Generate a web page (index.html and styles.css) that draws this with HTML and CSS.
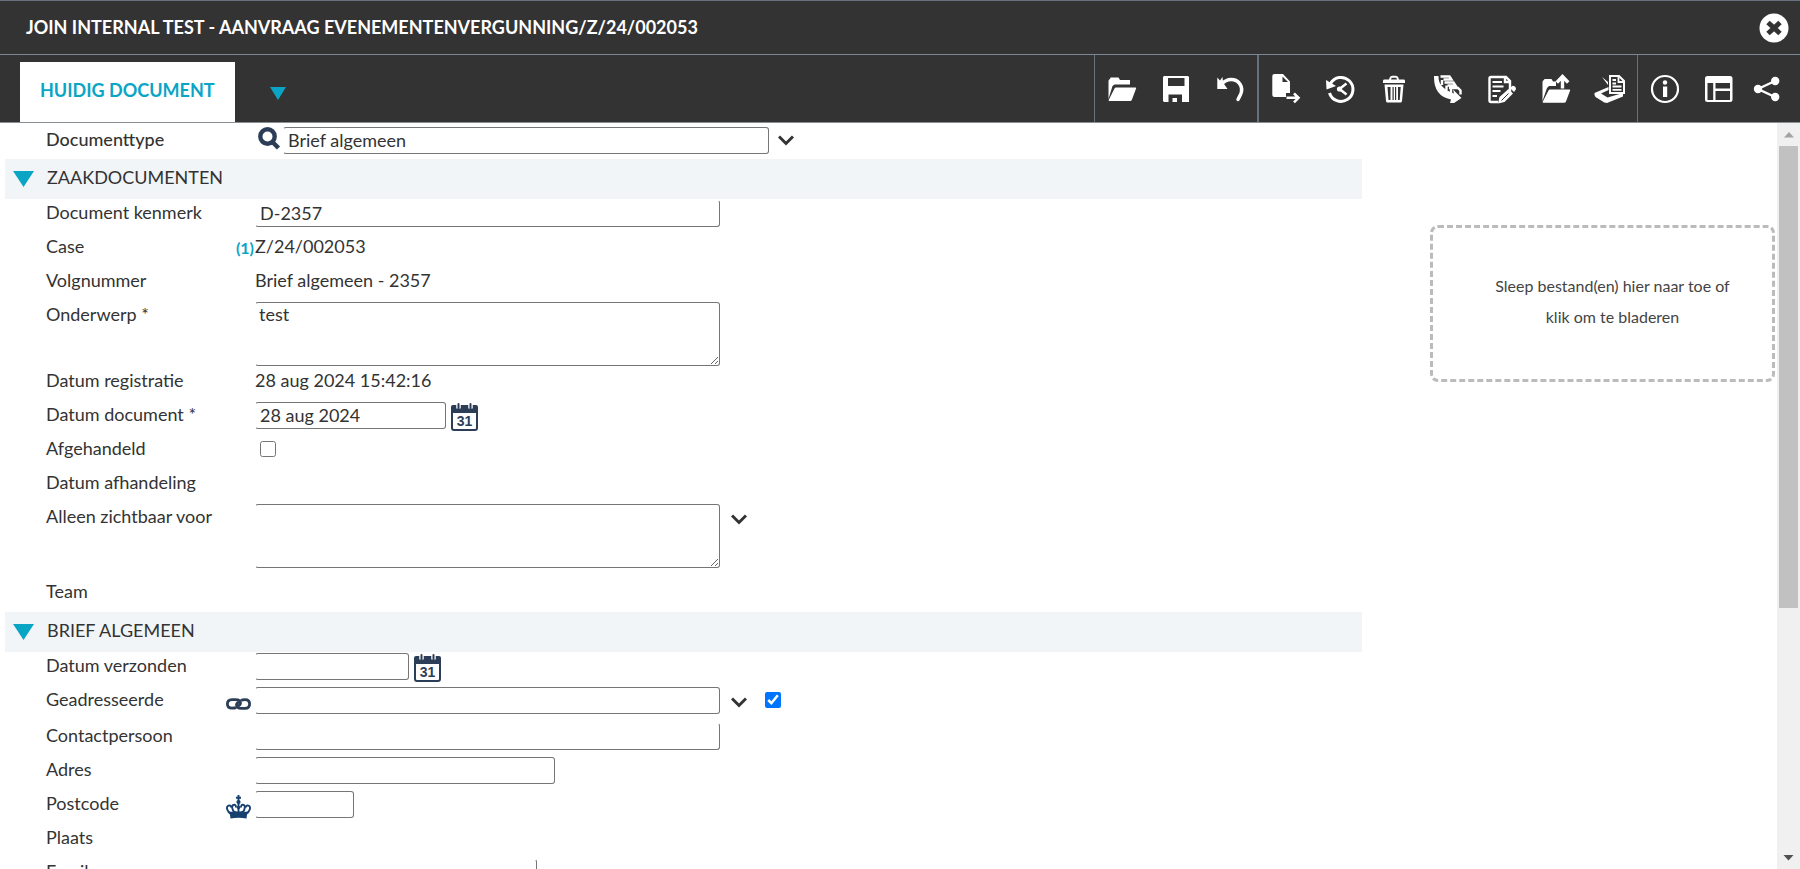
FILE: index.html
```html
<!DOCTYPE html>
<html lang="nl">
<head>
<meta charset="utf-8">
<title>Join internal test - Aanvraag evenementenvergunning</title>
<link rel="stylesheet" href="styles.css">
</head>
<body>
<svg class="defs" aria-hidden="true">
  <symbol id="chevron" viewBox="0 0 16 11"><path d="M1 1.500 8 8.500 15 1.500" fill="none" stroke="#333" stroke-width="3"/></symbol>
  <symbol id="calendar" viewBox="0 0 27 28">
    <rect x="1" y="4" width="25" height="23" rx="2" fill="#fff" stroke="#2c3e57" stroke-width="2"/>
    <path d="M0 10V4q0-2 2-2h23q2 0 2 2v6z" fill="#2c3e57"/>
    <path d="M7.500 0v5.500M19.500 0v5.500" stroke="#fff" stroke-width="4.500"/>
    <path d="M7.500 1v4M19.500 1v4" stroke="#2c3e57" stroke-width="2" stroke-linecap="round"/>
    <text x="13.500" y="23" text-anchor="middle" class="cal-text">31</text>
  </symbol>
</svg>

<header class="titlebar">
  <h1 class="title">JOIN INTERNAL TEST - AANVRAAG EVENEMENTENVERGUNNING/Z/24/002053</h1>
  <button class="close" type="button" aria-label="Sluiten">
    <svg viewBox="0 0 30 30" width="30" height="30"><circle cx="15" cy="15" r="14.500" fill="#fff"/><path d="M9 9.500 21 20.500M21 9.500 9 20.500" stroke="#333" stroke-width="5"/></svg>
  </button>
</header>

<nav class="toolbar">
  <button class="tab" type="button">HUIDIG DOCUMENT</button>
  <button class="tab-more" type="button" aria-label="Meer tabbladen"><svg viewBox="0 0 16 13" width="16" height="13"><path d="M0 0h16L8 13z" fill="#0aa5c5"/></svg></button>
  <div class="tools">
    <div class="group">
      <button type="button" aria-label="Openen"><svg viewBox="0 0 36 36"><path d="M4.500 28V10q0-1.500 1.500-2l.5-1.500h8L16 9h10v4.500H10.500L8.500 15z"/><path d="M12 16.500h19.500q1 0 .6 1L28 28.500q-.6 1.500-2 1.500H5.500q-1.200 0-.8-1L10.500 17.500q.5-1 1.500-1z"/></svg></button>
      <button type="button" aria-label="Opslaan"><svg viewBox="0 0 36 36"><path fill-rule="evenodd" d="M6 5h24l1 1v25H6l-1-1V6zM10 7v8h16.500V7zM10.500 23.500V31h4v-4H19v4h5v-7.500z"/></svg></button>
      <button type="button" aria-label="Ongedaan maken"><svg viewBox="0 0 36 36"><path d="M5.300 6.500 8 9.500 10.500 6l.5 5.500 4.500 6.500H5.300z"/><path d="M9 13.500C13 9.500 16 8.500 19 8.500c8 0 13 7.500 9.500 15l-2.500 5" fill="none" stroke="#fff" stroke-width="3.500" stroke-linecap="round"/></svg></button>
    </div>
    <div class="group">
      <button type="button" aria-label="Document verplaatsen"><svg viewBox="0 0 36 36"><path fill-rule="evenodd" d="M6.500 3H15l7 7.500V22h-4v4H6.500q-2.200 0-2.200-2V5q0-2 2.200-2zM14.500 5.500v5.500H20z"/><path d="M18.500 26.800H30M26 22.300l4.500 4.500-4.500 4.500" fill="none" stroke="#fff" stroke-width="2.600"/></svg></button>
      <button type="button" aria-label="Geschiedenis"><svg viewBox="0 0 36 36"><path d="M8.500 12.500A12 12 0 1 1 7.500 22" fill="none" stroke="#fff" stroke-width="3"/><path d="M4 9l.5 9.500 9.500-3.500z"/><path d="M24.500 12.500 17.500 18l7 5.500" fill="none" stroke="#fff" stroke-width="2.500"/><circle cx="17.500" cy="18" r="2.600"/></svg></button>
      <button type="button" aria-label="Verwijderen"><svg viewBox="0 0 36 36"><path d="M7 12V9.800q0-1.300 1.500-1.300h4.500l1-2.800 2-1h4l2 1 1 2.800h4.500q1.500 0 1.500 1.300V12zM15 8.500h6l-.7-1.700h-4.600z" fill-rule="evenodd"/><path fill-rule="evenodd" d="M8.500 13.500h19L26 30q-.2 1.500-1.500 1.500h-13Q10.200 31.500 10 30zM11.500 16l1 13h2V16zm5 0v13h1.200V16zm2.500 0v13h1.200V16zm3 0v13h1.700l1-13z"/></svg></button>
      <button type="button" aria-label="Doorsturen"><svg viewBox="0 0 36 36"><path d="M10.500 5.500h9l2 3h-8M12 9v5M14.500 11.500h9l2 3h-8M16.500 14.500v5M19 17h9l2.500 2.500v4M21 18v4" fill="none" stroke="#fff" stroke-width="2.400"/><path d="M4 5h4.500q-.5 12 15.500 17.500l-1-4L31.500 27 24 32h-4l1-3.500Q3.500 25 4 5z"/></svg></button>
      <button type="button" aria-label="Document bewerken"><svg viewBox="0 0 36 36"><path d="M26 21V10l-4-4H7Q5.500 6 5.500 7.500v22q0 1.500 1.500 1.500h7M21 6v5h5" fill="none" stroke="#fff" stroke-width="2.400"/><path d="M8.500 11H18M8.500 15.500h11M8.500 20h8M8.500 25H13" stroke="#fff" stroke-width="1.800"/><path d="M14 32.500l1.500-6.500 9-8 4.500 4.500-8.500 8.500zM26 17l2.500-2.300q3.500 0 3.500 3.500L30 21z"/><path d="M17.500 29.500l7-7" stroke="#333"/></svg></button>
      <button type="button" aria-label="Exporteren"><svg viewBox="0 0 36 36"><path d="M4.500 30V11q0-1.500 1.500-2l.5-1h7l1.500 2.500h3V15H11L9 17z"/><path d="M12 18.500h19.500q1 0 .6 1L28 30.500q-.5 1.200-2 1.200H5.500q-1.200 0-.8-1L10.500 19.500q.5-1 1.500-1z"/><path d="M24.500 17.500V7M18.800 11.500l5.700-6 5.700 6" fill="none" stroke="#fff" stroke-width="3.400"/></svg></button>
      <button type="button" aria-label="Scannen"><svg viewBox="0 0 36 36"><path d="M10 6l6 5v3zM2.500 22l14-6v3L9 22.500l6.500 4L31 22v3.500L15 32q-3 0-5-2l-6.500-4q-1.500-1.500-1-4z"/><path fill="#333" stroke="#fff" stroke-width="2" d="M18 5h9l5 5v12H18z"/><path d="M26.500 5v6H32M20.500 9H24M20.500 12.500H24M20.500 15.500h9M20.500 18.800h9" fill="none" stroke="#fff" stroke-width="1.800"/></svg></button>
    </div>
    <div class="group group-end">
      <button type="button" aria-label="Informatie"><svg viewBox="0 0 36 36"><circle cx="18" cy="18" r="13" fill="none" stroke="#fff" stroke-width="2.200"/><circle cx="18" cy="11.500" r="2.200"/><path d="M16 15.500h4.200V26H16z"/></svg></button>
      <button type="button" aria-label="Indeling"><svg viewBox="0 0 36 36"><path fill-rule="evenodd" d="M6.500 5h22.500q2.500 0 2.500 2.500v21q0 2.500-2.500 2.500H6.500Q4 31 4 28.500v-21Q4 5 6.500 5zM6.500 12v17h5.700V12zm8 0v5.500H29V12zm0 8V29H29v-9z"/></svg></button>
      <button type="button" aria-label="Delen"><svg viewBox="0 0 36 36"><path d="M26 10 9 18l17 8" fill="none" stroke="#fff" stroke-width="2.400"/><circle cx="9" cy="18" r="4.200"/><circle cx="26.200" cy="10" r="4.200"/><circle cx="26.200" cy="26" r="4.200"/></svg></button>
    </div>
  </div>
</nav>

<main class="content">
  <form class="form">
    <div class="row row-type">
      <label class="label strong" for="type">Documenttype</label>
      <div class="aux"></div>
      <div class="field">
        <button class="icon search" type="button" aria-label="Zoeken"><svg viewBox="0 0 23 23" width="23" height="23"><circle cx="9.500" cy="9.500" r="7.200" fill="none" stroke="#2c3e57" stroke-width="4.400"/><path d="M14.500 15l6 6" stroke="#2c3e57" stroke-width="4.500"/></svg></button>
        <input class="box w-type" id="type" type="text" value="Brief algemeen">
        <button class="icon drop" type="button" aria-label="Keuzelijst"><svg width="16" height="11"><use href="#chevron"/></svg></button>
      </div>
    </div>

    <button class="section" type="button"><svg viewBox="0 0 21 16" width="21" height="16"><path d="M0 0h21L10.500 16z" fill="#0aa5c5"/></svg><span>ZAAKDOCUMENTEN</span></button>

    <div class="row"><label class="label" for="kenmerk">Document kenmerk</label><div class="aux"></div><div class="field"><input class="box w-full open-top" id="kenmerk" type="text" value="D-2357"></div></div>
    <div class="row"><span class="label">Case</span><div class="aux"><a class="count" href="#case">(1)</a></div><div class="field"><span class="value" id="case">Z/24/002053</span></div></div>
    <div class="row"><span class="label">Volgnummer</span><div class="aux"></div><div class="field"><span class="value">Brief algemeen - 2357</span></div></div>
    <div class="row row-area"><label class="label" for="onderwerp">Onderwerp *</label><div class="aux"></div><div class="field"><textarea class="box area w-full" id="onderwerp">test</textarea></div></div>
    <div class="row"><span class="label">Datum registratie</span><div class="aux"></div><div class="field"><span class="value">28 aug 2024 15:42:16</span></div></div>
    <div class="row"><label class="label" for="datum">Datum document *</label><div class="aux"></div><div class="field"><input class="box w-date" id="datum" type="text" value="28 aug 2024"><button class="icon cal" type="button" aria-label="Kalender"><svg width="27" height="28"><use href="#calendar"/></svg></button></div></div>
    <div class="row"><label class="label" for="afgehandeld">Afgehandeld</label><div class="aux"></div><div class="field"><input class="check" id="afgehandeld" type="checkbox"></div></div>
    <div class="row"><span class="label">Datum afhandeling</span></div>
    <div class="row row-visible"><label class="label" for="zichtbaar">Alleen zichtbaar voor</label><div class="aux"></div><div class="field"><textarea class="box area w-full" id="zichtbaar"></textarea><button class="icon drop" type="button" aria-label="Keuzelijst"><svg width="16" height="11"><use href="#chevron"/></svg></button></div></div>
    <div class="row"><span class="label">Team</span></div>

    <button class="section" type="button"><svg viewBox="0 0 21 16" width="21" height="16"><path d="M0 0h21L10.500 16z" fill="#0aa5c5"/></svg><span>BRIEF ALGEMEEN</span></button>

    <div class="row"><label class="label" for="verzonden">Datum verzonden</label><div class="aux"></div><div class="field"><input class="box w-sent" id="verzonden" type="text"><button class="icon cal" type="button" aria-label="Kalender"><svg width="27" height="28"><use href="#calendar"/></svg></button></div></div>
    <div class="row row-party"><label class="label" for="geadresseerde">Geadresseerde</label>
      <div class="aux"><button class="icon" type="button" aria-label="Koppelen"><svg viewBox="0 0 25 12" width="25" height="12"><g fill="none" stroke="#2c3e57" stroke-width="2.800"><path d="M10 9.500q-1 .7-4 .7Q1.400 10.200 1.400 6T6 1.600h3.500q5 0 5 3.400 0 2-2.500 3"/><path d="M15 2.500q1-.8 4-.8 4.600 0 4.600 4.300T19 10.400h-3.500q-5 0-5-3.400 0-2 2.500-3"/></g></svg></button></div>
      <div class="field"><input class="box w-full" id="geadresseerde" type="text"><button class="icon drop" type="button" aria-label="Keuzelijst"><svg width="16" height="11"><use href="#chevron"/></svg></button><input class="check check-gap" type="checkbox" checked aria-label="Geadresseerde actief"></div></div>
    <div class="row"><label class="label" for="contact">Contactpersoon</label><div class="aux"></div><div class="field"><input class="box w-full open-top" id="contact" type="text"></div></div>
    <div class="row"><label class="label" for="adres">Adres</label><div class="aux"></div><div class="field"><input class="box w-address" id="adres" type="text"></div></div>
    <div class="row"><label class="label" for="postcode">Postcode</label>
      <div class="aux"><button class="icon" type="button" aria-label="Adres ophalen"><svg viewBox="0 0 25 24" width="25" height="24"><g fill="none" stroke="#17406f" stroke-width="1.900"><path d="M12.500 0v18M10 2.700h5"/><path d="M5 19C1 16.500 0 12 2 10.800q2.500-1 3.500 1.700M20 19c4-2.500 5-7 3-8.200q-2.500-1-3.500 1.700"/><path d="M9 18C5.500 14.500 5.500 10.500 7.500 9.800q2.500-.6 2.500 2.700M16 18c3.500-3.500 3.500-7.500 1.500-8.200q-2.500-.6-2.500 2.700"/></g><g fill="#17406f"><circle cx="12.500" cy="7" r="2.100"/><circle cx="12.500" cy="12.500" r="1.800"/><path d="M3.500 16.500q4.500.8 5.500-.5 3.500 1 7 0 1 1.300 5.500.5l-1 7q-8-1.500-16 0z"/></g></svg></button></div>
      <div class="field"><input class="box w-post" id="postcode" type="text"></div></div>
    <div class="row"><span class="label">Plaats</span></div>
    <div class="row"><label class="label" for="email">Email</label><div class="aux"></div><div class="field"><input class="box w-mail open-top" id="email" type="email"></div></div>
  </form>

  <button class="dropzone" type="button">Sleep bestand(en) hier naar toe of<br>klik om te bladeren</button>

  <div class="scrollbar" aria-hidden="true">
    <svg viewBox="0 0 23 23" width="23" height="23"><path d="M7 14.500h10L12 9z" fill="#a3a3a3"/></svg>
    <div class="track"><div class="thumb"></div></div>
    <svg viewBox="0 0 23 23" width="23" height="23"><path d="M6.500 9h10l-5 5.500z" fill="#505050"/></svg>
  </div>
</main>
</body>
</html>
```

FILE: styles.css
```css
* { box-sizing: border-box; }

body {
  margin: 0;
  height: 100vh;
  display: flex;
  flex-direction: column;
  overflow: hidden;
  background: #fff;
  color: #333;
  font: 18px/24px Lato, "Open Sans", sans-serif;
}

button {
  margin: 0;
  padding: 0;
  border: 0;
  background: none;
  color: inherit;
  font: inherit;
  cursor: pointer;
}

svg { display: block; }
.defs { position: absolute; width: 0; height: 0; }
.cal-text { font: bold 14px "Liberation Sans", sans-serif; fill: #2c3e57; }

/* Title bar */
.titlebar {
  flex: none;
  height: 55px;
  display: flex;
  align-items: center;
  justify-content: space-between;
  padding: 0 11px 0 26px;
  border-top: 1px solid #66717d;
  border-bottom: 1px solid #7b8792;
  background: #333;
  color: #fff;
}
.title { margin: 0; padding-bottom: 2px; font-size: 18px; font-weight: 700; line-height: 24px; }

/* Tabs and tools */
.toolbar {
  flex: none;
  height: 68px;
  display: flex;
  align-items: stretch;
  padding-left: 20px;
  background: #333;
  border-bottom: 1px solid #8a8f93;
}
.tab {
  margin-top: 7px;
  padding: 0 20px 5px;
  background: #fff;
  color: #0aa5c5;
  font-weight: 700;
}
.tab-more { padding: 10px 35px 0; }
.tools { display: flex; margin-left: auto; }
.group { display: flex; border-left: 1px solid #66717d; }
.group + .group { border-left-width: 2px; }
.group.group-end { border-left-width: 1px; padding-right: 12px; }
.group button { width: 54px; display: flex; align-items: center; justify-content: center; }
.group-end button:last-child { width: 42px; }
.group svg { width: 36px; height: 36px; fill: #fff; }

/* Content */
.content { flex: 1; min-height: 0; display: flex; align-items: flex-start; overflow: hidden; }
.form { flex: 1; padding-left: 5px; }

.section {
  width: 100%;
  height: 40px;
  display: flex;
  align-items: center;
  gap: 13px;
  padding-left: 8px;
  padding-bottom: 4px;
  background: #f1f5f7;
}
.section svg { margin-top: 4px; }

.row {
  display: grid;
  grid-template-columns: 179px 30px 1fr;
  min-height: 34px;
  padding: 1px 0 0 41px;
}
.row-type { min-height: 36px; padding-top: 4px; }
.row-area { min-height: 66px; }
.row-visible { min-height: 75px; }
.row-party { min-height: 36px; }

.label { white-space: nowrap; }
.label.strong { font-weight: 500; }
.aux { display: flex; justify-content: flex-end; align-items: flex-start; padding-right: 4px; }
.aux .icon { margin-top: 4px; }
.row-party .aux .icon { margin-top: 11px; }
.count { margin-right: -3px; color: #0aa5c5; font-size: 16px; font-weight: 700; line-height: 28px; text-decoration: none; }
.field { display: flex; align-items: flex-start; }

.box {
  height: 27px;
  padding: 0 4px 1px;
  border: 1px solid #767676;
  border-left-color: transparent;
  border-radius: 3px;
  background: #fff;
  color: #333;
  font: inherit;
}
.open-top { border-top-color: transparent; }
.area { height: 64px; padding: 0 3px; line-height: 22px; resize: both; }
.w-full { width: 465px; }
.w-type { width: 486px; margin-left: 2px; }
.w-date { width: 191px; }
.w-sent { width: 154px; }
.w-address { width: 300px; }
.w-post { width: 99px; }
.w-mail { width: 282px; }

.search { margin-left: 3px; }
.drop { margin: 10px 0 0 11px; }
.row-type .drop { margin: 8px 0 0 9px; }
.cal { margin: 1px 0 0 5px; }
.check { width: 16px; height: 16px; margin: 5px 0 0 5px; }
.check-gap { margin-left: 18px; }

.dropzone {
  flex: none;
  width: 345px;
  min-height: 157px;
  margin: 102px 2px 0 68px;
  padding: 0 0 6px 20px;
  border: 3px dashed #bbb;
  border-radius: 8px;
  color: #444;
  font-size: 16px;
  line-height: 31px;
}

.scrollbar {
  flex: none;
  align-self: stretch;
  width: 23px;
  display: flex;
  flex-direction: column;
  background: #f0f0f0;
}
.track { flex: 1; padding: 0 2px; }
.thumb { height: 66%; background: #c1c1c1; }
```
